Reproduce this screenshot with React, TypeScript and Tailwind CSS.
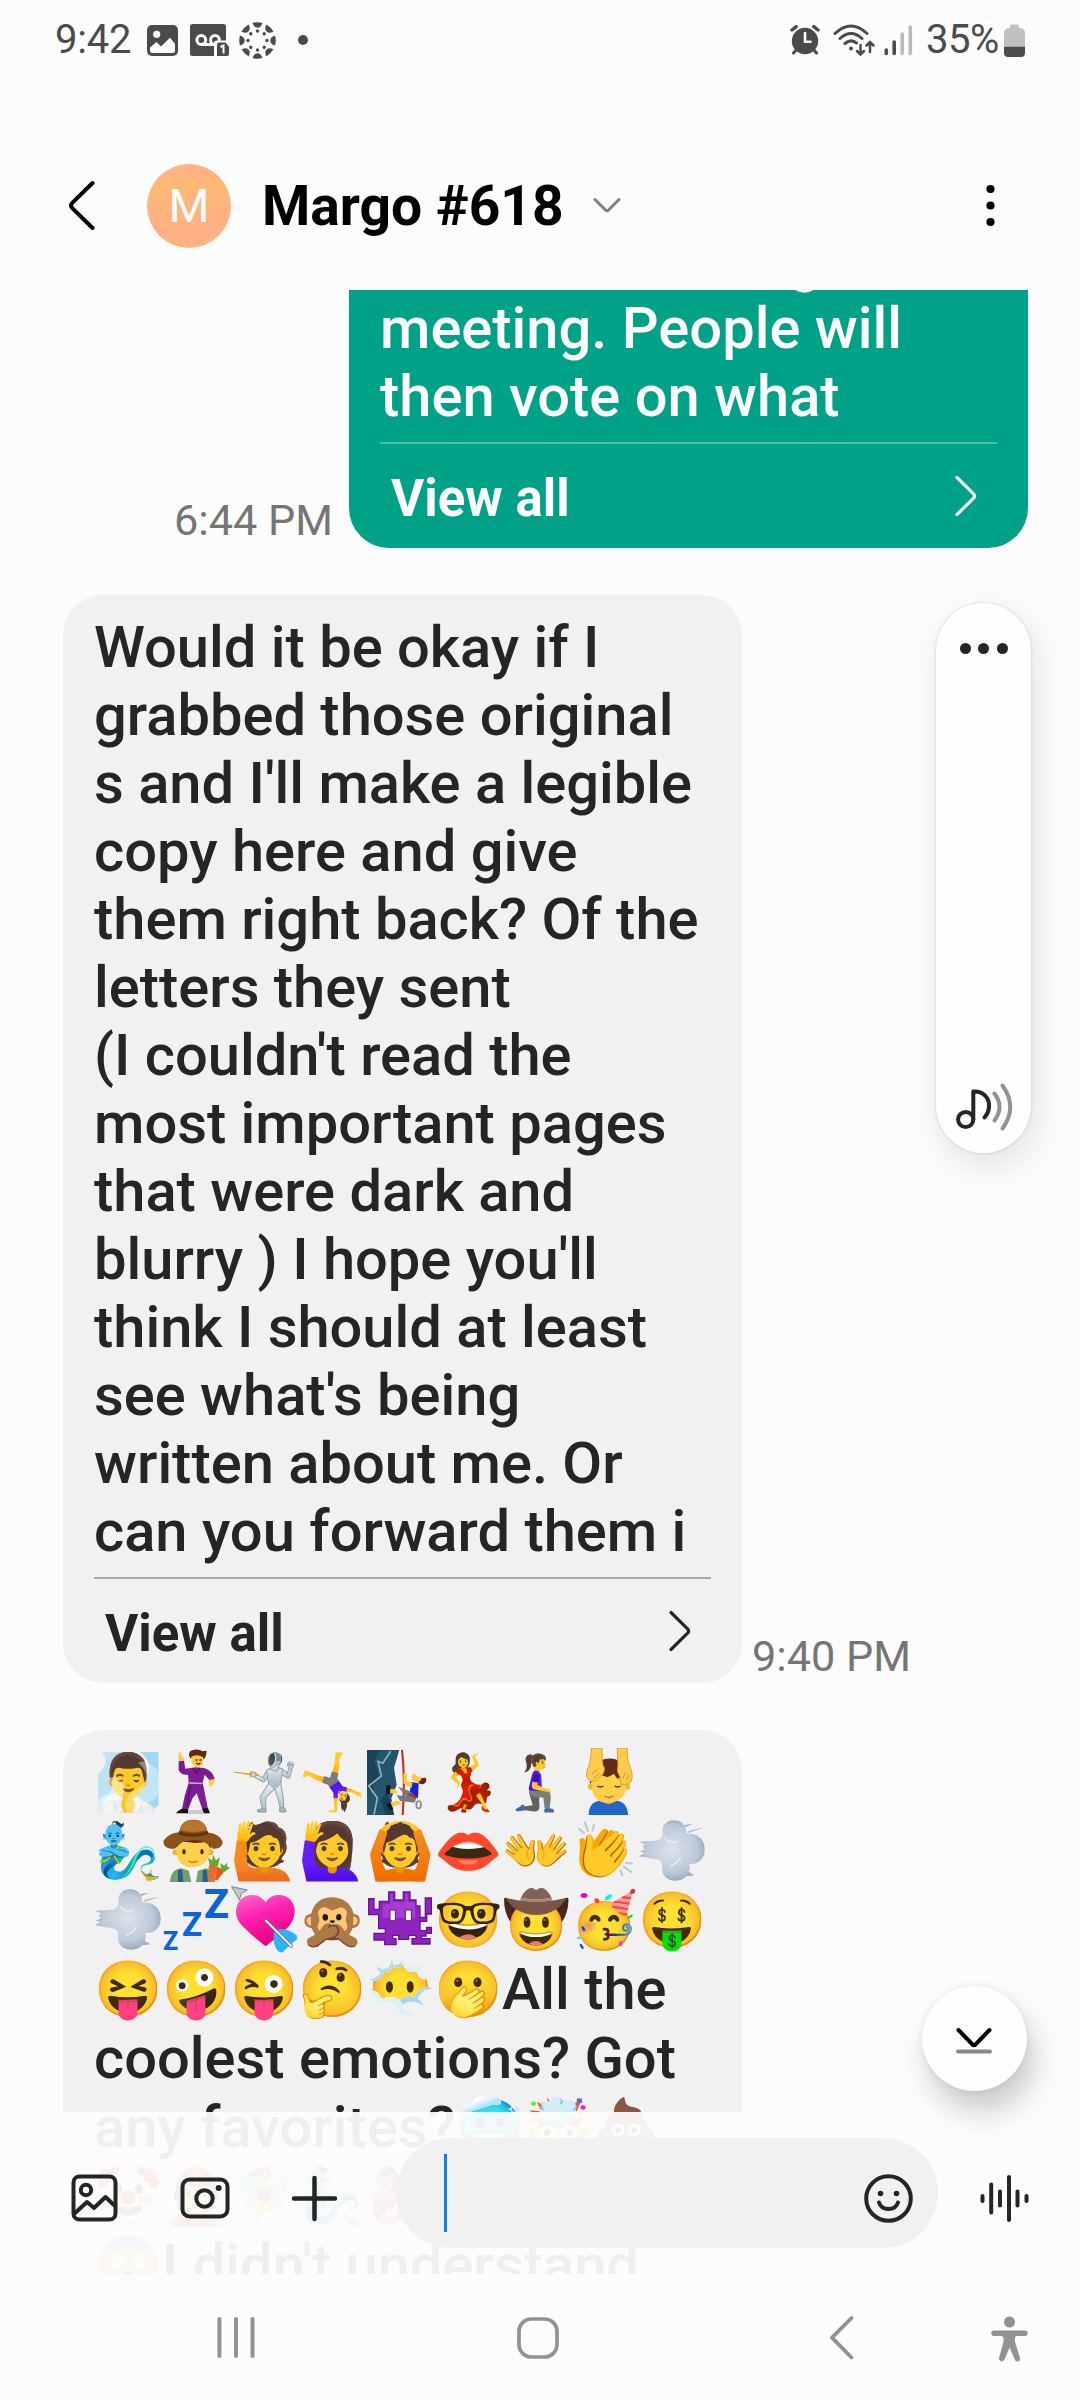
import type { ReactNode } from 'react';

const INK = '#252525';

type EmojiProps = { c: string; fx?: string };

/* One emoji in a fixed-width cell so that rows line up in columns. */
function Emoji({ c, fx = '' }: EmojiProps) {
  return (
    <span className={`inline-block h-[68px] w-[68px] shrink-0 text-center align-top text-[55px] leading-[68px] ${fx}`}>
      {c}
    </span>
  );
}

function SleepZs() {
  return (
    <span className="inline-flex h-[68px] w-[68px] shrink-0 items-end pl-[1px] font-extrabold leading-none text-[#0f62d8]">
      <span className="mb-[0px] w-[19px] text-[25px]">Z</span>
      <span className="mb-[13px] w-[22px] text-[33px]">Z</span>
      <span className="mb-[29px] w-[26px] text-[41px]">Z</span>
    </span>
  );
}

function Cell({ label, children }: { label: string; children: ReactNode }) {
  return (
    <svg role="img" aria-label={label} className="shrink-0" width="68" height="68" viewBox="0 0 204 204">
      {children}
    </svg>
  );
}

function Puff() {
  return (
    <Cell label="dash">
      <defs>
        <radialGradient id="puff" cx="0.5" cy="0.48" r="0.55">
          <stop offset="0" stopColor="#dbe3ec" /><stop offset="0.7" stopColor="#bccad8" /><stop offset="1" stopColor="#8fa4ba" />
        </radialGradient>
      </defs>
      <path fill="url(#puff)" d="M4 75 60 70Q72 66 74 52C70 22 88 9 108 10C134 10 146 28 145 50L196 32 150 42 150 50C184 48 201 72 200 98C200 128 178 142 152 142Q160 148 152 164L168 174 144 178C136 188 124 192 108 191C84 190 70 170 72 150Q74 134 62 128L3 118 20 108 6 104 20 96 14 88 22 82Z" />
      <path d="M140 24 166 20 142 30M146 172 168 174 148 177" fill="#9badbf" />
      <path d="M78 60Q92 82 120 72M96 148Q118 140 128 122" stroke="#e4ebf2" strokeWidth="5" fill="none" />
    </Cell>
  );
}

function HeartArrow() {
  return (
    <Cell label="heart with arrow">
      <defs>
        <linearGradient id="heart" x1="0" y1="0" x2="0.4" y2="1">
          <stop offset="0" stopColor="#ff6fd0" /><stop offset="0.45" stopColor="#ff22b4" /><stop offset="1" stopColor="#e8007c" />
        </linearGradient>
      </defs>
      <path d="M5 2 52 12 34 22 28 42Z" fill="#c3c9cc" stroke="#7b8387" strokeWidth="3" />
      <path d="M107 50C120 22 160 20 180 40C204 66 196 104 168 130Q140 156 107 181Q70 152 46 128C12 100 12 66 30 42C54 18 92 24 107 50Z" fill="url(#heart)" />
      <path d="M132 136Q160 118 200 148L202 158 180 178 156 200 144 196Q126 176 132 136Z" fill="#2eb2f3" />
      <path d="M106 102 184 180" stroke="#6b6b70" strokeWidth="10" strokeLinecap="round" />
      <path d="M108 104 184 180" stroke="#eceff2" strokeWidth="6" strokeLinecap="round" />
    </Cell>
  );
}

function Monster() {
  return (
    <Cell label="alien monster">
      <path d="M68 18H86V42H112V18H132V42H150V60H162V94H178V36H196V84H182V106H162V134H182V124H196V142H180V150H166V158H192V174H138V158H150V148H128V160H98V148H80V158H90V176H56V162H24V142H58V128H38V86H8V38H24V70H40V46H68Z" fill="#8f24bd" stroke="#691591" strokeWidth="4" />
      <path d="M72 24H80V48H118V24H126V48H148V96H50V54H72Z" fill="#a63bd4" />
      <path d="M72 72H88V104H72ZM118 72H136V104H118Z" fill="#fff" stroke="#5d1482" strokeWidth="3" />
    </Cell>
  );
}

function Dancer() {
  return (
    <Cell label="man dancing">
      <ellipse cx="100" cy="192" rx="44" ry="6" fill="#c9c9c9" />
      <path d="M84 30Q74 6 98 5Q114 4 122 10L134 8Q134 24 126 34Z" fill="#5c2a18" />
      <path d="M88 26Q104 16 124 28L122 50Q112 60 100 56L88 44ZM50 14 56 12 60 28 66 30 64 44 50 40ZM140 92 158 92 156 104 146 116 140 110Z" fill="#ffc93c" />
      <path d="M50 40 66 38 70 62 100 58 126 60Q150 66 158 92L142 96 128 80 122 104 126 124 138 184 122 186 104 136 92 150 78 186 60 184 68 144 80 104 78 80Q56 82 50 66Z" fill="#7c1d93" />
      <path d="M82 102 122 104 122 109 82 107Z" fill="#c9a7d4" />
      <path d="M94 62 104 76 114 60M86 110 74 178" stroke="#56106a" strokeWidth="4" fill="none" />
      <path d="M102 36h3M114 36h3M104 46q5 5 10 0" stroke="#3b1a10" strokeWidth="4" strokeLinecap="round" fill="none" />
      <path d="M60 182 78 184 78 196H42Q46 188 60 182ZM120 182 138 180 144 196H126Z" fill="#17120f" />
    </Cell>
  );
}

function Climber() {
  return (
    <Cell label="woman climbing">
      <path d="M3 6H100L84 60 92 110 76 150 84 201H3Z" fill="#23566d" />
      <path d="M3 6H44L24 40 40 84 14 130 3 120ZM60 201 44 160 62 130 84 201Z" fill="#17435a" />
      <path d="M74 10 50 46 36 40 46 84 8 114 34 150 24 200" stroke="#8fb2bf" strokeWidth="5" fill="none" />
      <path d="M108 6Q118 90 110 201" stroke="#d01f1f" strokeWidth="6" fill="none" />
      <circle cx="168" cy="96" r="13" fill="#5c2a18" />
      <circle cx="152" cy="88" r="15" fill="#ffc93c" />
      <path d="M142 76Q150 58 170 62Q186 68 184 88 166 96 142 76Z" fill="#eeeeee" />
      <path d="M136 102 158 106 156 150 130 140Z" fill="#1820dc" />
      <path d="M112 76 124 78 122 98 140 106 136 120 112 106ZM88 124 66 122 68 136 96 136ZM98 158 74 162 78 176 104 168Z" fill="#ffc93c" />
      <path d="M96 116 132 130 152 148 146 164 102 158 92 142 120 144Z" fill="#777" />
      <path d="M60 112 74 112 72 138 60 138ZM60 168 72 164 82 184 72 188Z" fill="#191919" />
      <path d="M128 138 152 148" stroke="#c4202b" strokeWidth="6" />
      <ellipse cx="158" cy="170" rx="7" ry="11" stroke="#8c8c8c" strokeWidth="5" fill="none" />
    </Cell>
  );
}

function Massage() {
  return (
    <Cell label="man getting massage">
      <path d="M56 201Q56 160 92 158H138Q172 160 174 201Z" fill="#2265cc" />
      <path d="M92 158Q116 178 138 158V148H92Z" fill="#eeb12f" />
      <circle cx="62" cy="116" r="9" fill="#f1b62f" /><circle cx="172" cy="116" r="9" fill="#f1b62f" />
      <path d="M66 80H168V118Q164 162 116 164T66 118Z" fill="#ffcf48" />
      <path d="M60 108Q54 46 90 38Q126 22 156 44Q176 60 172 106L160 84 142 92 132 78 112 88 92 80 76 90Z" fill="#632b17" />
      <path d="M82 114q9 6 18 0M134 114q9 6 18 0" stroke="#4b2614" strokeWidth="4" fill="none" />
      <path d="M104 144q12 8 26 0" stroke="#d2543a" strokeWidth="4" fill="none" />
      <path d="M64 0H96Q96 34 98 50Q108 60 100 76L86 90Q76 104 62 100Q44 90 52 66Q64 40 64 0ZM142 0H172Q170 38 182 62Q192 90 180 104 166 114 152 108L150 86Q138 72 144 54Z" fill="#ffcb4b" stroke="#dda02f" strokeWidth="3" />
      <path d="M66 78 82 64M72 90 88 76M158 94 166 74M170 98 174 78" stroke="#d6972b" strokeWidth="3" />
    </Cell>
  );
}

function Farmer() {
  return (
    <Cell label="man farmer">
      <path d="M24 195Q26 158 58 154L94 166 132 154Q156 160 160 195Z" fill="#6fa06d" />
      <path d="M48 195V160L60 156 64 195ZM122 195V160L134 158 138 195Z" fill="#2b5d8c" />
      <path d="M80 160H108L102 195H88Z" fill="#f4f4f4" />
      <circle cx="40" cy="106" r="9" fill="#f1b62f" /><circle cx="146" cy="106" r="9" fill="#f1b62f" />
      <path d="M44 78H142V108Q138 146 94 150T44 108Z" fill="#ffd04a" />
      <path d="M38 96 36 64H148L146 96 134 76 100 78 60 74Z" fill="#5f2915" />
      <path d="M4 72Q20 48 52 46Q56 8 94 8T136 46Q174 52 182 74Q184 92 154 96 130 68 92 70T34 96Q2 94 4 72Z" fill="#8b5319" />
      <path d="M54 38Q60 10 94 10T134 38Q94 52 54 38Z" fill="#ba762d" />
      <path d="M50 42Q94 58 138 42L138 52Q94 68 50 52Z" fill="#5f3510" />
      <ellipse cx="66" cy="104" rx="5" ry="8" fill="#3f2217" /><ellipse cx="120" cy="104" rx="5" ry="8" fill="#3f2217" />
      <path d="M80 132q12 8 26 0" stroke="#d2543a" strokeWidth="4" fill="none" />
      <path d="M140 146Q160 140 172 152L154 192Q146 198 140 190Z" fill="#f2672b" />
      <path d="M168 152Q182 154 186 164L166 190 158 188Z" fill="#e6541d" />
      <path d="M144 148 138 122 150 130 154 114 162 130 174 120 168 148ZM176 158 176 138 186 146 196 136 194 148 204 152 186 166Z" fill="#68a82f" />
    </Cell>
  );
}

function Row({ h = 'h-[69px]', children }: { h?: string; children: ReactNode }) {
  return <div className={`flex items-center whitespace-pre ${h}`}>{children}</div>;
}

function Chevron({ color }: { color: string }) {
  return (
    <svg width="23" height="42" viewBox="0 0 23 42" fill="none" stroke={color} strokeWidth="3.2" strokeLinecap="round" strokeLinejoin="round">
      <path d="M2 2.5 18.6 18.8Q20.6 21 18.6 23.2L2 39.5" />
    </svg>
  );
}

function ViewAll({ line, color }: { line: string; color: string }) {
  return (
    <>
      <div className={`h-[2px] w-[617px] ${line}`} />
      <div className="flex h-[104px] items-center justify-between pr-[19px] pl-[11px] text-[51px] font-bold leading-[60px]">
        <span className="pt-[5px]">View all</span>
        <span className="pb-[1px]"><Chevron color={color} /></span>
      </div>
    </>
  );
}

function StatusBar() {
  const petals = [0, 45, 90, 135, 180, 225, 270, 315];
  return (
    <div className="flex h-[80px] shrink-0 items-center justify-between pr-[55px] pl-[55px] text-[#4b4b4b]">
      <div className="flex h-[40px] items-center">
        <span className="w-[92px] text-[40px] leading-[40px] tracking-[-0.2px]">9:42</span>
        <svg width="31" height="31" viewBox="0 0 31 31">
          <rect width="31" height="31" rx="5" fill="#4b4b4b" />
          <circle cx="9.7" cy="9.3" r="3.6" fill="#fcfcfc" />
          <path d="M3 22.5 9.5 17l4.5 4.5L23 12.8 28 19v6.5q0 2.5-2.5 2.5h-20Q3 28 3 25.500Z" fill="#fcfcfc" />
        </svg>
        <svg className="ml-[12px]" width="39" height="33" viewBox="0 0 39 33">
          <rect width="36" height="32" rx="2.5" fill="#4b4b4b" />
          <g fill="none" stroke="#fcfcfc" strokeWidth="3">
            <circle cx="11.300" cy="16" r="4.400" />
            <circle cx="25" cy="16" r="4.400" />
            <path d="M11 20.500H25" />
          </g>
          <path d="M24 33V19.500q0-3 3-3h12V33Z" fill="#fcfcfc" />
          <path d="M27 32V20.500q0-2 2-2h6.500l3.500 4V30q0 2-2 2Z" fill="#4b4b4b" />
          <path d="M30.500 23 33.500 21.500V29.500" fill="none" stroke="#fcfcfc" strokeWidth="2" />
        </svg>
        <svg className="ml-[10px]" width="37" height="37" viewBox="-18.500 -18.500 37 37" fill="#4b4b4b">
          {petals.map((a) => (
            <g key={a} transform={`rotate(${a})`}>
              <path d="M-5-17.500Q0-19 5-17.500Q3.500-12.800 0-12.800T-5-17.500Z" />
              <circle cy="-9.500" r="1.700" />
            </g>
          ))}
        </svg>
        <span className="ml-[22px] size-[10px] rounded-full bg-[#4b4b4b]" />
      </div>
      <div className="flex h-[40px] items-center">
        <svg width="30" height="30" viewBox="0 0 30 30">
          <circle cx="15" cy="16" r="13.200" fill="#4b4b4b" />
          <g fill="none" stroke="#4b4b4b" strokeLinecap="round">
            <path d="M2 5 6.200 1.700M28 5 23.800 1.700" strokeWidth="3.400" />
            <path d="M6 25 3.500 28M24 25 26.500 28" strokeWidth="3" />
          </g>
          <path d="M15 8v8.700h5.500" fill="none" stroke="#fcfcfc" strokeWidth="2.600" strokeLinecap="round" />
        </svg>
        <svg className="ml-[13px]" width="43" height="32" viewBox="0 0 43 32" fill="none" stroke="#4b4b4b" strokeWidth="3" strokeLinecap="round">
          <path d="M2 9.500Q18 -5.500 34 9.500M7 14.500Q18 4.500 29 14.500M12 19.500Q18 14.500 23.500 19" />
          <circle cx="18" cy="24.500" r="2" fill="#4b4b4b" stroke="none" />
          <path strokeWidth="2.500" d="M27.500 21V30M24 27 27.500 30.500 31 27M37 28V18.500M33.500 21.500 37 18 40.500 21.500" />
        </svg>
        <svg className="ml-[8px]" width="30" height="31" viewBox="0 0 30 31" stroke="#4b4b4b" strokeWidth="3.600" strokeLinecap="round">
          <path d="M2.300 25v3.500M10.200 17v11.500" />
          <path d="M18.200 9v19.500M26.300 2v26.500" stroke="#bababa" />
        </svg>
        <span className="ml-[12px] w-[77px] text-[40px] leading-[40px] tracking-[-0.5px]">35%</span>
        <svg className="ml-[1px]" width="21" height="33" viewBox="0 0 21 33">
          <path d="M6 4V2q0-1.500 1.500-1.500h6Q15 .500 15 2v2q6 0 6 5v14H0V9Q0 4 6 4Z" fill="#c0c0c0" />
          <path d="M0 22.700H21V29q0 4-4 4H4Q0 33 0 29Z" fill="#4b4b4b" />
        </svg>
      </div>
    </div>
  );
}

function Header() {
  return (
    <div className="flex h-[210px] shrink-0 items-center pt-[41px] pl-[68px]">
      <svg width="28" height="51" viewBox="0 0 28 51" fill="none" stroke="#000" strokeWidth="4" strokeLinecap="round" strokeLinejoin="round">
        <path d="M24.500 3 4 23.200Q2 25.500 4 27.800L24.500 48" />
      </svg>
      <div className="ml-[51px] flex size-[84px] items-center justify-center rounded-full bg-[linear-gradient(#ffb184_0%,#ffb480_17%,#fdb974_18%,#ffb57b_48%,#ffb184_65%)] text-[47px] leading-none text-white">
        M
      </div>
      <h1 className="ml-[31px] w-[300px] whitespace-pre text-[55.2px] font-bold leading-[64px] text-black">Margo #618</h1>
      <svg className="ml-[31px]" width="28" height="17" viewBox="0 0 28 17" fill="none" stroke="#808080" strokeWidth="3" strokeLinecap="round" strokeLinejoin="round">
        <path d="M2 2.500 12.500 13Q14 14.500 15.500 13L26 2.500" />
      </svg>
      <svg className="ml-auto mr-[84px]" width="11" height="43" viewBox="0 0 11 43">
        <circle cx="5.500" cy="5" r="4.100" /><circle cx="5.500" cy="21.500" r="4.100" /><circle cx="5.500" cy="38" r="4.100" />
      </svg>
    </div>
  );
}

const message = [
  'Would it be okay if I', 'grabbed those original', "s and I'll make a legible", 'copy here and give',
  'them right back? Of the', 'letters they sent', "(I couldn't read the", 'most important pages',
  'that were dark and', "blurry ) I hope you'll", 'think I should at least', "see what's being",
  'written about me. Or', 'can you forward them i',
];

function Thread() {
  return (
    <div className="relative h-[1984px] shrink-0 overflow-hidden text-[57.85px] font-medium leading-[68px] text-[#252525]">
      <div className="flex h-[258px] items-end justify-end pr-[52px]">
        <span className="mr-[16px] mb-[5px] text-[43.2px] font-normal leading-[44px] text-[#757575]">6:44 PM</span>
        <div className="w-[679px] rounded-b-[40px] bg-[#00a287] px-[31px] text-[#fcfcfc]">
          <div className="flex h-[152px] flex-col justify-end pb-[12px] whitespace-pre">
            <div>discussed during</div>
            <div>meeting. People will</div>
            <div>then vote on what</div>
          </div>
          <ViewAll line="bg-[#4dbeab]" color="#fcfcfc" />
        </div>
      </div>
      <div className="mt-[47px] flex items-end pl-[63px]">
        <div className="h-[1088px] w-[679px] rounded-[40px] bg-[#f1f1f1] px-[31px] pt-[18px]">
          <div className="h-[964px] whitespace-pre">
            {message.map((l) => <div key={l}>{l}</div>)}
          </div>
          <ViewAll line="bg-[#a8a8a8]" color={INK} />
        </div>
        <span className="ml-[10px] mb-[4px] text-[43.2px] font-normal leading-[44px] text-[#757575]">9:40 PM</span>
      </div>
      <div className="mt-[47px] ml-[63px] h-[560px] w-[679px] rounded-t-[40px] bg-[#f1f1f1] pt-[17px] pl-[31px]">
        <Row>
          <Emoji c="🧖‍♂️" /><Dancer /><Emoji c="🤺" /><Emoji c="🤸‍♀️" /><Climber /><Emoji c="💃" /><Emoji c="🧎‍♀️" fx="-scale-x-100" /><Massage />
        </Row>
        <Row>
          <Emoji c="🧞‍♂️" /><Farmer /><Emoji c="🙋" /><Emoji c="🙋‍♀️" /><Emoji c="🙆" /><Emoji c="👄" fx="hue-rotate-[35deg] saturate-150" /><Emoji c="👐" /><Emoji c="👏" fx="-scale-x-100" /><Puff />
        </Row>
        <Row>
          <Puff /><SleepZs /><HeartArrow /><Emoji c="🙊" fx="brightness-90 contrast-125" /><Monster /><Emoji c="🤓" /><Emoji c="🤠" /><Emoji c="🥳" /><Emoji c="🤑" />
        </Row>
        <Row>
          <Emoji c="😝" /><Emoji c="🤪" /><Emoji c="😜" /><Emoji c="🤔" /><Emoji c="😶‍🌫️" /><Emoji c="🫢" />All the
        </Row>
        <Row>coolest emotions? Got</Row>
        <Row>any favorites?<Emoji c="🥶" /><Emoji c="🤯" /><Emoji c="💩" /></Row>
        <Row>
          <Emoji c="🤡" /><Emoji c="👲" /><Emoji c="🧚‍♀️" /><Emoji c="🧞‍♂️" /><Emoji c="🧞‍♀️" fx="hue-rotate-[110deg]" />
        </Row>
        <Row><Emoji c="😱" />I didn't understand</Row>
      </div>
      <EffectsPill />
      <ScrollDown />
      <Composer />
    </div>
  );
}

/* Floating pill beside the long message. */
function EffectsPill() {
  return (
    <div className="absolute top-[313px] left-[936px] flex h-[550px] w-[95px] flex-col items-center justify-between rounded-full bg-[#fdfdfd] pt-[40px] pb-[21px] shadow-[0_0_3px_rgba(0,0,0,0.16),5px_12px_34px_rgba(0,0,0,0.11)]">
      <div className="flex gap-[7.5px]">
        <span className="size-[11px] rounded-full bg-[#252525]" />
        <span className="size-[11px] rounded-full bg-[#252525]" />
        <span className="size-[11px] rounded-full bg-[#252525]" />
      </div>
      <svg className="ml-[2px]" width="58" height="50" viewBox="0 0 58 50" fill="none" strokeWidth="4" strokeLinecap="round" strokeLinejoin="round">
        <g stroke={INK}>
          <ellipse cx="9.700" cy="37.500" rx="7.600" ry="7.500" />
          <path d="M17.300 37.500V9.500C27 8.500 34 16 33 25.500Q32.500 31 28.500 35.500" />
        </g>
        <path d="M38.500 11.500Q48.500 25 38.500 38.500M46.500 3.500Q62 25 46.500 46.500" stroke="#929292" />
      </svg>
    </div>
  );
}

function ScrollDown() {
  return (
    <div className="absolute top-[1696px] left-[922px] z-10 flex size-[105px] items-center justify-center rounded-full bg-[#fdfdfd] shadow-[0_0_6px_rgba(0,0,0,0.08),7px_20px_30px_rgba(0,0,0,0.2)]">
      <svg className="mt-[4px] -ml-[1px]" width="38" height="28" viewBox="0 0 38 28" fill="none" strokeWidth="4" strokeLinecap="round" strokeLinejoin="round">
        <path d="M3.500 3 17.500 17.500Q19 19 20.500 17.500L34.500 3" stroke="#000" />
        <path d="M3 24.500H35" stroke="#8a8a8a" />
      </svg>
    </div>
  );
}

/* Translucent input bar laid over the end of the thread. */
function Composer() {
  return (
    <div className="absolute inset-x-0 bottom-0 flex h-[162px] items-center bg-[#fcfcfc]/94 pl-[71px]">
      <svg className="mt-[10px]" width="47" height="48" viewBox="0 0 47 48" fill="none" stroke={INK} strokeWidth="4" strokeLinejoin="round">
        <rect x="2.500" y="2.500" width="42" height="43" rx="6" />
        <circle cx="15" cy="16" r="5.200" />
        <path d="M3 40 16 28 23 34 34.500 23 44 32" />
      </svg>
      <svg className="ml-[62px] mt-[10px]" width="50" height="42" viewBox="0 0 50 42" fill="none" stroke={INK} strokeWidth="4">
        <rect x="2.500" y="2.500" width="45" height="37" rx="7" />
        <circle cx="24.500" cy="21.500" r="8.200" />
        <circle cx="38.700" cy="11" r="3" fill={INK} stroke="none" />
      </svg>
      <svg className="ml-[61px] mt-[11px]" width="47" height="47" viewBox="0 0 47 47" stroke={INK} strokeWidth="4.500" strokeLinecap="round">
        <path d="M23.500 3V44M3 23.500H44" />
      </svg>
      <div className="ml-[58px] flex h-[110px] w-[542px] items-center rounded-full bg-[#f1f1f1] pl-[48px] pr-[25px]">
        <span className="h-[78px] w-[3px] bg-[#0e7ff0]" />
        <svg className="ml-auto mt-[11px]" width="49" height="49" viewBox="0 0 49 49" fill="none" stroke={INK} strokeWidth="4" strokeLinecap="round">
          <circle cx="24.500" cy="24.500" r="22.300" />
          <circle cx="16.500" cy="19.500" r="2.800" fill={INK} stroke="none" />
          <circle cx="32.500" cy="19.500" r="2.800" fill={INK} stroke="none" />
          <path d="M15 28.500Q17 35 24.500 35T34 28.500" />
        </svg>
      </div>
      <svg className="ml-[41px] mt-[11px]" width="51" height="49" viewBox="0 0 51 49" stroke={INK} strokeWidth="4" strokeLinecap="round">
        <path d="M3.500 22v5M12.200 10.500v28M21 17.500v14M30 3v43M38.500 17.500v14M47.500 22v5" />
      </svg>
    </div>
  );
}

function NavBar() {
  return (
    <div className="flex h-[126px] shrink-0 items-center pt-[1px] pl-[216px] text-[#929292]">
      <svg width="40" height="43" viewBox="0 0 40 43" stroke="currentColor" strokeWidth="4" strokeLinecap="round">
        <path d="M3.400 3v37M20 3v37M36.500 3v37" />
      </svg>
      <svg className="ml-[261px]" width="42" height="42" viewBox="0 0 42 42" fill="none" stroke="currentColor" strokeWidth="3.700">
        <rect x="2" y="2" width="38" height="38" rx="12.500" />
      </svg>
      <svg className="ml-[269px]" width="26" height="46" viewBox="0 0 26 46" fill="none" stroke="currentColor" strokeWidth="3.800" strokeLinecap="round" strokeLinejoin="round">
        <path d="M23.500 3 4 22.700 23.500 42.500" />
      </svg>
      <svg className="ml-[135px] mt-[3px]" width="40" height="48" viewBox="0 0 40 48" fill="currentColor">
        <circle cx="20.500" cy="7" r="5.500" />
        <path d="M5 15.500H36Q38.700 15.500 38.700 18.300T36 21H28Q26 21 26 23V27L31 43Q31.500 46 29 46.500T26 45L20.500 32.500 15.500 44.500Q14 47 12 46.500T10 43L14.500 27V23Q14.500 21 12 21H5Q2.300 21 2.300 18.300T5 15.500Z" />
      </svg>
    </div>
  );
}

export default function App() {
  return (
    <div className="flex h-[2400px] w-[1080px] flex-col overflow-hidden bg-[#fcfcfc] font-['Roboto',sans-serif]">
      <StatusBar />
      <Header />
      <Thread />
      <NavBar />
    </div>
  );
}
